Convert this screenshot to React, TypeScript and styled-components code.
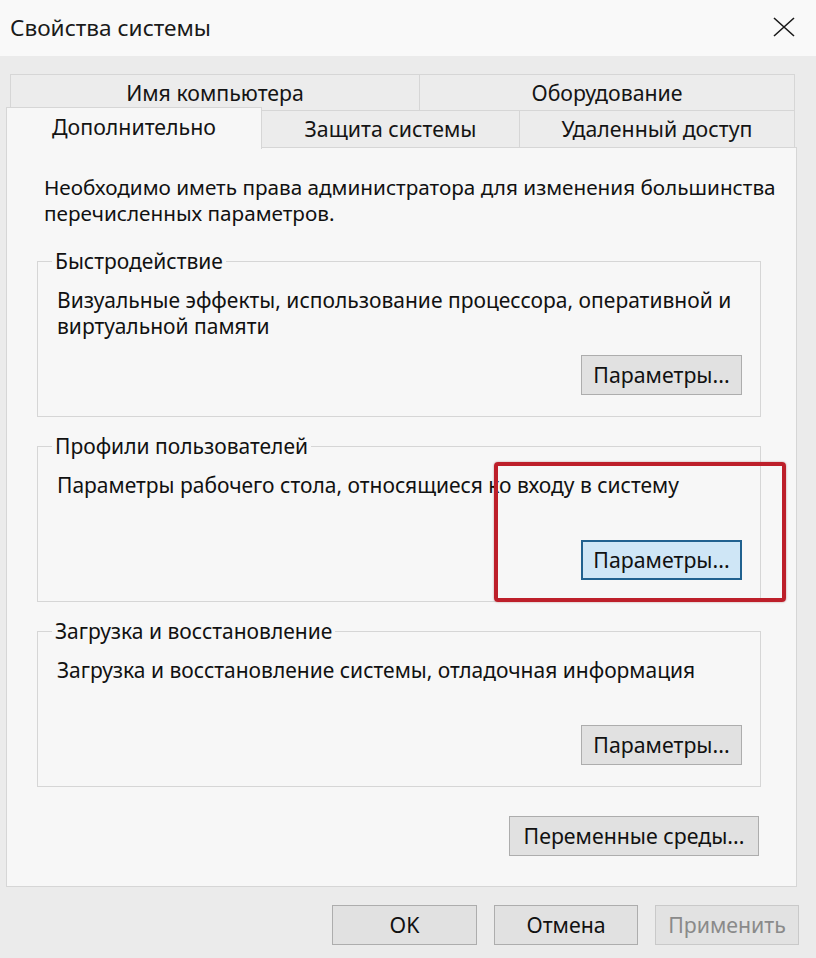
import React from "react";
import styled, { createGlobalStyle } from "styled-components";

const Global = createGlobalStyle`
  html, body { margin: 0; padding: 0; background: #ebebeb; }
  * { box-sizing: border-box; }
`;

const FONT = `"Noto Sans", "Open Sans", sans-serif`;

const Window = styled.div`
  position: relative;
  width: 816px;
  height: 958px;
  background: #ebebeb;
  font-family: ${FONT};
  color: #111;
  display: flex;
  flex-direction: column;
  overflow: hidden;
`;

const TitleBar = styled.div`
  height: 56px;
  flex: none;
  background: #f9f9f9;
  display: flex;
  align-items: center;
  justify-content: space-between;
  padding: 0 21px 2px 10px;
`;

const Title = styled.div`
  font-size: 22.6px;
  color: #1a1a1a;
`;

const Content = styled.div`
  padding: 18px 17px 0 6px;
  display: flex;
  flex-direction: column;
`;

const TabRow = styled.div<{ $inset?: boolean }>`
  display: flex;
  align-items: flex-end;
  height: ${(p) => (p.$inset ? "37px" : "38px")};
  margin: ${(p) => (p.$inset ? "0 0 0 4px" : "-1px 0 0 0")};
`;

const Tab = styled.div<{ $w: number; $active?: boolean; $first?: boolean }>`
  position: relative;
  width: ${(p) => p.$w}px;
  height: ${(p) => (p.$active ? "42px" : "100%")};
  margin-left: ${(p) => (p.$first ? "0" : "-1px")};
  margin-top: ${(p) => (p.$active ? "-3px" : "0")};
  margin-bottom: ${(p) => (p.$active ? "-1px" : "0")};
  z-index: ${(p) => (p.$active ? 2 : 1)};
  background: ${(p) => (p.$active ? "#f7f7f7" : "#ececec")};
  border: 1px solid #d6d6d6;
  border-bottom: ${(p) => (p.$active ? "none" : "1px solid #d6d6d6")};
  display: flex;
  align-items: center;
  justify-content: center;
  font-size: 21.3px;
  color: #141414;
  padding-bottom: ${(p) => (p.$active ? "5px" : "1px")};
`;

const Panel = styled.div`
  margin-top: -1px;
  width: 791px;
  background: #f7f7f7;
  border: 1px solid #d6d6d6;
  padding: 26px 35px 30px 30px;
  display: flex;
  flex-direction: column;
`;

const Description = styled.p`
  margin: 0;
  padding-left: 7px;
  font-size: 20.7px;
  line-height: 26px;
  color: #111;
  white-space: nowrap;
`;

const Group = styled.fieldset`
  margin: 17px 0 0 0;
  padding: 0 18px 21px 14px;
  border: 1px solid #d6d6d6;
  min-width: 0;
  &:first-of-type { margin-top: 23px; }
`;

const Legend = styled.legend`
  padding: 0 3px;
  font-size: 21px;
  line-height: 24px;
  color: #111;
`;

const GroupBody = styled.div`
  height: 122px;
  padding: 14px 0 0 5px;
  display: flex;
  flex-direction: column;
`;

const GroupText = styled.div`
  font-size: 21px;
  line-height: 26px;
  color: #111;
  white-space: nowrap;
`;

const ButtonRow = styled.div<{ $mt?: number; $mr?: number }>`
  display: flex;
  justify-content: flex-end;
  margin-top: ${(p) => (p.$mt !== undefined ? `${p.$mt}px` : "auto")};
  margin-right: ${(p) => p.$mr ?? 0}px;
`;

const Button = styled.button<{ $w: number; $focused?: boolean }>`
  width: ${(p) => p.$w}px;
  height: 40px;
  font-family: ${FONT};
  font-size: 21.3px;
  color: #111;
  background: ${(p) => (p.$focused ? "#cfe6f6" : "#e1e1e1")};
  border: ${(p) => (p.$focused ? "2px solid #20618f" : "1px solid #adadad")};
  padding: 0 0 2px 0;
  display: flex;
  align-items: center;
  justify-content: center;
  white-space: nowrap;
  &:disabled {
    color: #8a8a8a;
    background: #e2e2e2;
    border-color: #c9c9c9;
  }
`;

const Footer = styled.div`
  display: flex;
  justify-content: flex-end;
  gap: 17px;
  padding-top: 18px;
`;

const Highlight = styled.div`
  position: absolute;
  left: 494px;
  top: 462px;
  width: 292px;
  height: 140px;
  border: 4px solid #bd1f2a;
  border-radius: 4px;
  box-shadow: 0 0 2px rgba(110, 0, 0, 0.45);
  pointer-events: none;
`;

const CloseIcon = () => (
  <svg width="22" height="20" viewBox="0 0 22 20">
    <path d="M1 1 L21 19 M21 1 L1 19" stroke="#1a1a1a" strokeWidth="1.6" fill="none" />
  </svg>
);

const groups = [
  {
    title: "Быстродействие",
    text: (
      <>
        Визуальные эффекты, использование процессора, оперативной и
        <br />
        виртуальной памяти
      </>
    ),
    focused: false,
  },
  {
    title: "Профили пользователей",
    text: <>Параметры рабочего стола, относящиеся ко входу в систему</>,
    focused: true,
  },
  {
    title: "Загрузка и восстановление",
    text: <>Загрузка и восстановление системы, отладочная информация</>,
    focused: false,
  },
];

export default function App() {
  return (
    <Window>
      <Global />
      <TitleBar>
        <Title>Свойства системы</Title>
        <CloseIcon />
      </TitleBar>
      <Content>
        <TabRow $inset>
          <Tab $w={410} $first>Имя компьютера</Tab>
          <Tab $w={376}>Оборудование</Tab>
        </TabRow>
        <TabRow>
          <Tab $w={256} $first $active>Дополнительно</Tab>
          <Tab $w={259}>Защита системы</Tab>
          <Tab $w={276}>Удаленный доступ</Tab>
        </TabRow>
        <Panel>
          <Description>
            Необходимо иметь права администратора для изменения большинства
            <br />
            перечисленных параметров.
          </Description>
          {groups.map((g) => (
            <Group key={g.title}>
              <Legend>{g.title}</Legend>
              <GroupBody>
                <GroupText>{g.text}</GroupText>
                <ButtonRow>
                  <Button $w={161} $focused={g.focused}>Параметры...</Button>
                </ButtonRow>
              </GroupBody>
            </Group>
          ))}
          <ButtonRow $mt={29} $mr={2}>
            <Button $w={250}>Переменные среды...</Button>
          </ButtonRow>
        </Panel>
        <Footer>
          <Button $w={145}>OK</Button>
          <Button $w={144}>Отмена</Button>
          <Button $w={144} disabled>Применить</Button>
        </Footer>
      </Content>
      <Highlight />
    </Window>
  );
}
